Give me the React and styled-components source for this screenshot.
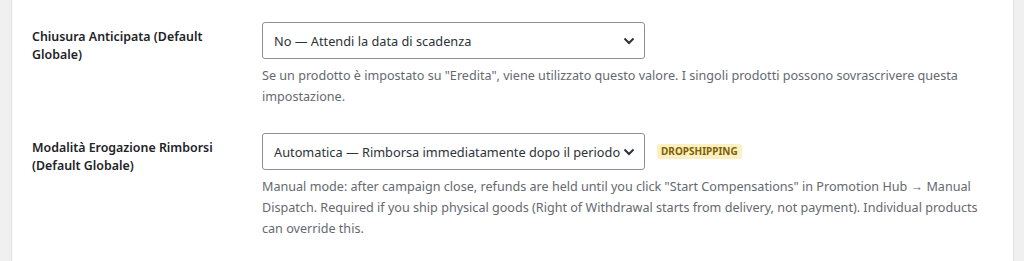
import React from "react";
import styled, { createGlobalStyle } from "styled-components";

const Global = createGlobalStyle`
  html, body { margin: 0; padding: 0; background: #f0f0f1; }
  body { font-family: "Noto Sans", "Liberation Sans", sans-serif; color: #1d2327; }
`;

const Page = styled.div`
  display: flex;
  height: 261px;
  padding: 0 10px 0 11px;
  box-sizing: border-box;
`;

const Panel = styled.div`
  flex: 1;
  background: #fff;
  border-left: 1px solid #e2e2e4;
  border-right: 1px solid #e2e2e4;
  padding: 22px 0 0 20px;
  display: flex;
  flex-direction: column;
  gap: 26px;
`;

const Row = styled.div`
  display: grid;
  grid-template-columns: 200px 1fr;
  column-gap: 30px;
  align-items: start;
`;

const Label = styled.div`
  font-size: 12.4px;
  font-weight: 600;
  line-height: 18px;
  padding-top: 6px;
  color: #1d2327;
`;

const Field = styled.div`
  display: flex;
  flex-direction: column;
  gap: 6px;
`;

const Line = styled.div`
  display: flex;
  align-items: center;
  gap: 12px;
`;

const Select = styled.div`
  width: 383px;
  height: 37px;
  box-sizing: border-box;
  border: 1px solid #8c8f94;
  border-radius: 3px;
  padding: 0 9px 0 11px;
  display: flex;
  align-items: center;
  gap: 3px;
  font-size: 12.75px;
  color: #2c3338;
  background: #fff;
`;

const SelectText = styled.span`
  flex: 1;
  white-space: nowrap;
  overflow: hidden;
`;

const Badge = styled.span`
  background: #fcf0c3;
  color: #7d5f00;
  font-size: 10px;
  font-weight: 700;
  line-height: 15px;
  padding: 0 4px;
  border-radius: 3px;
`;

const Desc = styled.p`
  margin: 0;
  font-size: 12.6px;
  line-height: 21px;
  color: #646970;
  max-width: 720px;
`;

const Chevron = () => (
  <svg width="12" height="8" viewBox="0 0 12 8" fill="none">
    <path d="M1.5 1.5 L6 6 L10.5 1.5" stroke="#2c3338" strokeWidth="2" />
  </svg>
);

const settings = [
  {
    label: "Chiusura Anticipata (Default Globale)",
    value: "No — Attendi la data di scadenza",
    desc: 'Se un prodotto è impostato su "Eredita", viene utilizzato questo valore. I singoli prodotti possono sovrascrivere questa impostazione.',
  },
  {
    label: "Modalità Erogazione Rimborsi (Default Globale)",
    value: "Automatica — Rimborsa immediatamente dopo il periodo",
    badge: "DROPSHIPPING",
    desc: 'Manual mode: after campaign close, refunds are held until you click "Start Compensations" in Promotion Hub → Manual Dispatch. Required if you ship physical goods (Right of Withdrawal starts from delivery, not payment). Individual products can override this.',
  },
];

export default function App() {
  return (
    <>
      <Global />
      <Page>
        <Panel>
          {settings.map((s) => (
            <Row key={s.label}>
              <Label>{s.label}</Label>
              <Field>
                <Line>
                  <Select>
                    <SelectText>{s.value}</SelectText>
                    <Chevron />
                  </Select>
                  {s.badge && <Badge>{s.badge}</Badge>}
                </Line>
                <Desc>{s.desc}</Desc>
              </Field>
            </Row>
          ))}
        </Panel>
      </Page>
    </>
  );
}
